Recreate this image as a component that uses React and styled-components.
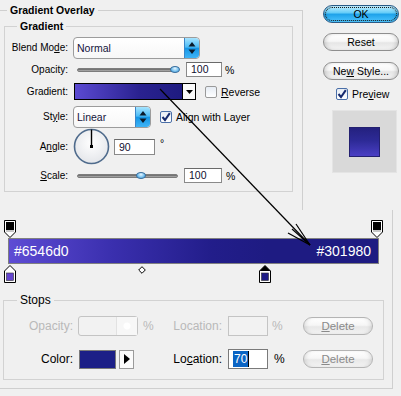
import React from 'react';
import styled, { createGlobalStyle } from 'styled-components';

const GlobalStyle = createGlobalStyle`
  html, body {
    margin: 0;
    padding: 0;
    background: #f0f0f0;
  }
  body {
    font-family: "Liberation Sans", Arial, sans-serif;
    color: #000;
  }
`;

const Page = styled.div`
  position: relative;
  width: 401px;
  height: 396px;
  overflow: hidden;
  background: #f0f0f0;
`;

const TopArea = styled.div`
  display: flex;
  height: 210px;
`;

const EffectPanel = styled.div`
  box-sizing: border-box;
  width: 303px;
  height: 200px;
  margin-top: 10px;
  border-top: 1px solid #cfcfcf;
  border-right: 1px solid #cfcfcf;
`;

const Legend = styled.div`
  width: fit-content;
  margin: ${(p) => p.$top || -7}px 0 0 ${(p) => p.$indent}px;
  padding: 0 3px;
  background: #f0f0f0;
  font-size: ${(p) => p.$size || 10.5}px;
  font-weight: ${(p) => (p.$bold ? 700 : 400)};
  line-height: ${(p) => p.$lh || 13}px;
`;

const GroupBox = styled.div`
  box-sizing: border-box;
  width: 289px;
  height: 166px;
  margin: 9px 0 0 4px;
  border: 1px solid #d2d2d2;
`;

const FormRow = styled.div`
  display: flex;
  align-items: ${(p) => p.$align || 'center'};
  height: ${(p) => p.$h}px;
  margin-top: ${(p) => p.$mt}px;
`;

const Label = styled.div`
  flex: none;
  width: 63px;
  margin-right: 5px;
  text-align: right;
  font-size: 10px;
  line-height: 12px;
  align-self: center;
`;

const Key = styled.span`
  text-decoration: underline;
`;

const SelectBox = styled.div`
  box-sizing: border-box;
  display: flex;
  width: ${(p) => p.$w}px;
  height: 22px;
  border: 1px solid #9c9c9c;
  border-radius: 4px;
  background: linear-gradient(#ffffff, #f7f7f7);
  overflow: hidden;
`;

const SelectText = styled.div`
  flex: 1;
  padding-left: 3px;
  font-size: 10.5px;
  line-height: 20px;
  color: #14143c;
`;

const SelectSpin = styled.div`
  display: flex;
  align-items: center;
  justify-content: center;
  width: 14px;
  border-left: 1px solid #3a86c8;
  background: linear-gradient(#a6e4ff 0%, #4cbcf6 45%, #1596e6 52%, #3fb4f6 100%);
  border-radius: 0 3px 3px 0;
`;

const Track = styled.div`
  position: relative;
  box-sizing: border-box;
  width: ${(p) => p.$w}px;
  height: 4px;
  margin-left: 4px;
  border-radius: 2px;
  border: 1px solid #7c7c7c;
  background: linear-gradient(#5e5e5e, #b5b5b5);
`;

const Thumb = styled.div`
  position: absolute;
  top: -3px;
  width: 10px;
  height: 7px;
  border-radius: 50%;
  border: 1px solid #3b6f9e;
  background: radial-gradient(ellipse at 50% 30%, #e8f6ff 0%, #7cc4f0 55%, #2b86c8 100%);
  box-sizing: border-box;
`;

const NumField = styled.div`
  box-sizing: border-box;
  width: ${(p) => p.$w}px;
  height: ${(p) => p.$h || 15}px;
  margin-left: ${(p) => p.$ml}px;
  border: 1px solid #8a8a8a;
  border-top-color: #6a6a6a;
  background: #fff;
  padding-left: 4px;
  font-size: 10.5px;
  line-height: ${(p) => (p.$h || 15) - 2}px;
  color: #101030;
`;

const Unit = styled.div`
  margin-left: ${(p) => p.$ml}px;
  font-size: ${(p) => p.$size || 10.5}px;
  align-self: ${(p) => p.$self || 'center'};
  color: ${(p) => p.$color || '#000'};
`;

const GradientPicker = styled.div`
  box-sizing: border-box;
  display: flex;
  width: 122px;
  height: 17px;
  margin-left: 1px;
  border: 1px solid #000;
`;

const GradientSwatch = styled.div`
  flex: 1;
  border-right: 1px solid #000;
  background: linear-gradient(to right, #5b4ad2, #2a2290 60%, #1e1b80);
`;

const DropCell = styled.div`
  display: flex;
  align-items: center;
  justify-content: center;
  width: 12px;
  background: #fafafa;
`;

const CheckBox = styled.div`
  box-sizing: border-box;
  display: flex;
  align-items: center;
  justify-content: center;
  flex: none;
  width: 12px;
  height: 12px;
  margin-left: ${(p) => p.$ml}px;
  border: 1px solid ${(p) => (p.$on ? '#4a6fa8' : '#9a9a9a')};
  border-radius: 2px;
  background: linear-gradient(#e6ecf4, #ffffff);
`;

const CheckText = styled.div`
  margin-left: 4px;
  font-size: 10.5px;
  line-height: 12px;
`;

const SideColumn = styled.div`
  display: flex;
  flex-direction: column;
  width: 98px;
  padding: 5px 0 0 20px;
  box-sizing: border-box;
`;

const PillButton = styled.div`
  box-sizing: border-box;
  width: 76px;
  height: 18px;
  margin-top: ${(p) => p.$mt}px;
  border: 1px solid ${(p) => (p.$primary ? '#2c5b86' : '#8e8e8e')};
  border-radius: 9px;
  background: ${(p) =>
    p.$primary
      ? 'linear-gradient(#c4f0ff 0%, #66cdf8 42%, #1ea2ea 52%, #4ec6ff 100%)'
      : 'linear-gradient(#ffffff 0%, #f7f7f7 45%, #e6e6e6 55%, #f4f4f4 100%)'};
  box-shadow: inset 3px 0 4px -2px rgba(0, 0, 0, 0.18), inset -3px 0 4px -2px rgba(0, 0, 0, 0.18);
  outline: ${(p) => (p.$primary ? '1px dotted #1a1a1a' : 'none')};
  outline-offset: -3px;
  text-align: center;
  font-size: 10.5px;
  line-height: 16px;
`;

const PreviewRow = styled.div`
  display: flex;
  align-items: center;
  margin: 8px 0 0 13px;
`;

const PreviewBox = styled.div`
  display: flex;
  align-items: center;
  justify-content: center;
  width: 65px;
  height: 63px;
  margin: 10px 0 0 9px;
  background: #d9d9d9;
  border: 1px solid #e4e4e4;
  box-sizing: border-box;
`;

const PreviewSwatch = styled.div`
  width: 31px;
  height: 30px;
  border: 1px solid #232070;
  box-sizing: border-box;
  background: linear-gradient(#24217f, #2d2a96 45%, #4a3fc4);
`;

const EditorPanel = styled.div`
  box-sizing: border-box;
  width: 393px;
  height: 179px;
  padding-top: 10px;
  border-right: 1px solid #cfcfcf;
  border-bottom: 1px solid #cfcfcf;
`;

const StopStrip = styled.div`
  position: relative;
  height: ${(p) => p.$h}px;
`;

const Marker = styled.svg`
  position: absolute;
  top: ${(p) => p.$top}px;
`;

const GradientBar = styled.div`
  box-sizing: border-box;
  display: flex;
  align-items: center;
  justify-content: space-between;
  width: 371px;
  height: 26px;
  margin-left: 8px;
  padding: 0 7px 0 5px;
  border: 1px solid #808080;
  background: linear-gradient(to right, #5e4cd4 0%, #3a2fae 28%, #221d8a 55%, #1e1b82 70%, #1e1b82 100%);
  color: #fff;
  font-size: 14px;
`;

const StopsGroup = styled.div`
  box-sizing: border-box;
  width: 381px;
  height: 80px;
  margin: 17px 0 0 3px;
  border: 1px solid #d2d2d2;
`;

const StopRow = styled.div`
  display: grid;
  grid-template-columns: 69px 65px 15px 69px 46px 35px 70px;
  align-items: center;
  height: 20px;
  margin-top: ${(p) => p.$mt}px;
  font-size: 12px;
  color: ${(p) => (p.$disabled ? '#b9b9b9' : '#000')};
`;

const StopLabel = styled.div`
  text-align: right;
`;

const Cell = styled.div`
  display: flex;
  align-items: center;
  padding-left: ${(p) => p.$pl || 0}px;
`;

const DimField = styled.div`
  box-sizing: border-box;
  display: flex;
  justify-content: flex-end;
  width: ${(p) => p.$w}px;
  height: 20px;
  margin-left: ${(p) => p.$ml}px;
  border: 1px solid #c4c4c4;
  border-radius: ${(p) => (p.$round ? 3 : 0)}px;
  background: #f2f2f2;
`;

const DimKnob = styled.div`
  width: 20px;
  border-left: 1px solid #e2e2e2;
  background: radial-gradient(circle at 50% 50%, #ffffff 0 3px, #f7f7f7 4px);
`;

const ColorSwatch = styled.div`
  box-sizing: border-box;
  width: 37px;
  height: 19px;
  margin-left: 6px;
  border: 1px solid #7a7a7a;
  background: #1c1f87;
`;

const ArrowCell = styled.div`
  box-sizing: border-box;
  display: flex;
  align-items: center;
  justify-content: center;
  width: 15px;
  height: 19px;
  margin-left: 3px;
  border: 1px solid #9a9a9a;
  background: #fbfbfb;
`;

const EditField = styled.div`
  box-sizing: border-box;
  display: flex;
  align-items: center;
  width: 40px;
  height: 20px;
  margin-left: 6px;
  padding-left: 4px;
  border: 1px solid #7a7a7a;
  background: #fff;
`;

const Selected = styled.span`
  background: #0a64c4;
  color: #fff;
  line-height: 16px;
  padding: 0 1px;
`;

const Caret = styled.span`
  width: 1px;
  height: 16px;
  background: #000;
`;

const DeleteButton = styled.div`
  box-sizing: border-box;
  width: 70px;
  height: 18px;
  border: 1px solid #b4b4b4;
  border-radius: 9px;
  background: linear-gradient(#ffffff 0%, #f6f6f6 45%, #e8e8e8 55%, #f3f3f3 100%);
  box-shadow: inset 3px 0 4px -2px rgba(0, 0, 0, 0.12), inset -3px 0 4px -2px rgba(0, 0, 0, 0.12);
  text-align: center;
  font-size: 11.5px;
  line-height: 16px;
  color: #8a8a8a;
`;

const ArrowLayer = styled.svg`
  position: absolute;
  left: 0;
  top: 0;
  pointer-events: none;
`;

const SpinArrows = () => (
  <svg width="8" height="14" viewBox="0 0 8 14">
    <path d="M4 1 L7.5 5.5 H0.5 Z" fill="#0a1a2a" />
    <path d="M0.5 8.5 H7.5 L4 13 Z" fill="#0a1a2a" />
  </svg>
);

const Check = () => (
  <svg width="10" height="10" viewBox="0 0 10 10">
    <path d="M1.5 5 L4 8 L8.8 1.2" fill="none" stroke="#162a6e" strokeWidth="2" />
  </svg>
);

const Slider = ({ value }) => (
  <Track $w={101}>
    <Thumb style={{ left: `${value * 0.96 - 4}px` }} />
  </Track>
);

const Dial = () => (
  <svg width="37" height="37" viewBox="0 0 37 37">
    <defs>
      <radialGradient id="dialFill" cx="50%" cy="40%" r="60%">
        <stop offset="0%" stopColor="#ffffff" />
        <stop offset="100%" stopColor="#e4e6ea" />
      </radialGradient>
    </defs>
    <circle cx="18.5" cy="18.5" r="17" fill="url(#dialFill)" stroke="#4f6b8c" strokeWidth="1.6" />
    <line x1="18.5" y1="18.5" x2="18.5" y2="1.5" stroke="#000" strokeWidth="1.4" />
    <rect x="17" y="17" width="3" height="3" fill="#000" />
  </svg>
);

const opacityStops = [0, 100];
const colorStops = [
  { loc: 0, color: '#6546d0', selected: false },
  { loc: 69.5, color: '#1e1c86', selected: true },
];
const stopX = (loc) => 9.5 + loc * 3.67 - 6;

function OpacityStop({ loc }) {
  return (
    <Marker $top={0} width="12" height="18" viewBox="0 0 12 18" style={{ left: stopX(loc) }}>
      <path d="M0.5 0.5 H11.5 V12 L6 17.5 L0.5 12 Z" fill="#fff" stroke="#000" />
      <rect x="2" y="2" width="8" height="8" fill="#000" />
      <rect x="2" y="10" width="8" height="2" fill="#c8c8c8" />
    </Marker>
  );
}

function ColorStop({ loc, color, selected }) {
  return (
    <Marker $top={1} width="12" height="18" viewBox="0 0 12 18" style={{ left: stopX(loc) }}>
      <path d="M6 0.5 L11.5 6 V17.5 H0.5 V6 Z" fill="#fff" stroke="#000" />
      {selected && <path d="M6 0.5 L11.5 6 H0.5 Z" fill="#000" />}
      <rect x="2.5" y="8" width="7" height="7.5" fill={color} stroke="#303030" strokeWidth="0.6" />
    </Marker>
  );
}

export default function App() {
  return (
    <Page>
      <GlobalStyle />
      <TopArea>
        <EffectPanel>
          <Legend $bold $indent={7}>Gradient Overlay</Legend>
          <GroupBox>
            <Legend $bold $indent={12}>Gradient</Legend>

            <FormRow $h={22} $mt={4}>
              <Label>Blend Mo<Key>d</Key>e:</Label>
              <SelectBox $w={127}>
                <SelectText>Normal</SelectText>
                <SelectSpin><SpinArrows /></SelectSpin>
              </SelectBox>
            </FormRow>

            <FormRow $h={15} $mt={3}>
              <Label>Opacity:</Label>
              <Slider value={100} />
              <NumField $w={36} $ml={8}>100</NumField>
              <Unit $ml={3}>%</Unit>
            </FormRow>

            <FormRow $h={17} $mt={6}>
              <Label>Gradient:</Label>
              <GradientPicker>
                <GradientSwatch />
                <DropCell>
                  <svg width="7" height="4" viewBox="0 0 7 4"><path d="M0 0 H7 L3.5 4 Z" fill="#000" /></svg>
                </DropCell>
              </GradientPicker>
              <CheckBox $ml={9} />
              <CheckText><Key>R</Key>everse</CheckText>
            </FormRow>

            <FormRow $h={22} $mt={6}>
              <Label>St<Key>y</Key>le:</Label>
              <SelectBox $w={78}>
                <SelectText>Linear</SelectText>
                <SelectSpin><SpinArrows /></SelectSpin>
              </SelectBox>
              <CheckBox $ml={9} $on><Check /></CheckBox>
              <CheckText>Align with Layer</CheckText>
            </FormRow>

            <FormRow $h={37} $mt={0}>
              <Label>A<Key>n</Key>gle:</Label>
              <Dial />
              <NumField $w={41} $h={16} $ml={4}>90</NumField>
              <Unit $ml={5} $self="flex-start" style={{ marginTop: 9 }}>°</Unit>
            </FormRow>

            <FormRow $h={15} $mt={3}>
              <Label><Key>S</Key>cale:</Label>
              <Slider value={65} />
              <NumField $w={38} $ml={6}>100</NumField>
              <Unit $ml={4}>%</Unit>
            </FormRow>
          </GroupBox>
        </EffectPanel>

        <SideColumn>
          <PillButton $primary $mt={0}>OK</PillButton>
          <PillButton $mt={10}>Reset</PillButton>
          <PillButton $mt={11}>Ne<Key>w</Key> Style...</PillButton>
          <PreviewRow>
            <CheckBox $ml={0} $on><Check /></CheckBox>
            <CheckText>Pre<Key>v</Key>iew</CheckText>
          </PreviewRow>
          <PreviewBox>
            <PreviewSwatch />
          </PreviewBox>
        </SideColumn>
      </TopArea>

      <EditorPanel>
        <StopStrip $h={18}>
          {opacityStops.map((loc) => (
            <OpacityStop key={loc} loc={loc} />
          ))}
        </StopStrip>
        <GradientBar>
          <span>#6546d0</span>
          <span>#301980</span>
        </GradientBar>
        <StopStrip $h={19}>
          {colorStops.map((s) => (
            <ColorStop key={s.loc} {...s} />
          ))}
          <Marker $top={2} width="8" height="8" viewBox="0 0 8 8" style={{ left: 138 }}>
            <path d="M4 0.7 L7.3 4 L4 7.3 L0.7 4 Z" fill="#fff" stroke="#000" />
          </Marker>
        </StopStrip>

        <StopsGroup>
          <Legend $indent={13} $size={12} $lh={15} $top={-8}>Stops</Legend>
          <StopRow $mt={8} $disabled>
            <StopLabel>Opacity:</StopLabel>
            <Cell>
              <DimField $w={60} $ml={5} $round><DimKnob /></DimField>
            </Cell>
            <Cell $pl={5}>%</Cell>
            <StopLabel>Location:</StopLabel>
            <Cell>
              <DimField $w={40} $ml={6} />
            </Cell>
            <Cell $pl={4}>%</Cell>
            <DeleteButton><Key>D</Key>elete</DeleteButton>
          </StopRow>
          <StopRow $mt={13}>
            <StopLabel>Color:</StopLabel>
            <Cell>
              <ColorSwatch />
              <ArrowCell>
                <svg width="6" height="10" viewBox="0 0 6 10"><path d="M0 0 L6 5 L0 10 Z" fill="#000" /></svg>
              </ArrowCell>
            </Cell>
            <div />
            <StopLabel>Lo<Key>c</Key>ation:</StopLabel>
            <Cell>
              <EditField>
                <Selected>70</Selected>
                <Caret />
              </EditField>
            </Cell>
            <Cell $pl={6}>%</Cell>
            <DeleteButton><Key>D</Key>elete</DeleteButton>
          </StopRow>
        </StopsGroup>
      </EditorPanel>

      <ArrowLayer width="401" height="396" viewBox="0 0 401 396">
        <g stroke="#000" strokeWidth="1.2" fill="none">
          <line x1="160" y1="89" x2="310" y2="245" />
          <line x1="296" y1="224" x2="310" y2="245" />
          <line x1="288" y1="233" x2="310" y2="245" />
          <line x1="292" y1="229" x2="310" y2="245" />
        </g>
      </ArrowLayer>
    </Page>
  );
}
